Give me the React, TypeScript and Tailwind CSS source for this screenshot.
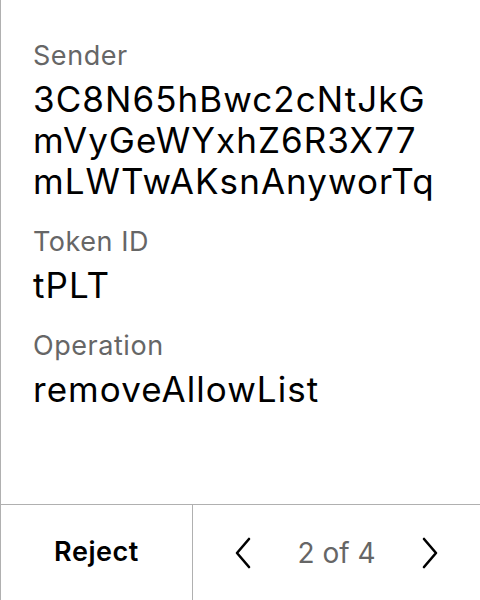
const Field = ({ label, children }: { label: string; children: React.ReactNode }) => (
  <div className="flex flex-col">
    <p className="text-[27px] leading-[32px] tracking-[0.02em] text-[#666666]">{label}</p>
    <div className="mt-[7px] text-[35px] leading-[41px] tracking-[0.03em] text-black">{children}</div>
  </div>
);

const Chevron = ({ dir }: { dir: "left" | "right" }) => (
  <svg width="18" height="32" viewBox="0 0 18 32" fill="none" stroke="black" strokeWidth="2.6" strokeLinecap="round" strokeLinejoin="round">
    {dir === "left" ? <polyline points="15,2 3,16 15,30" /> : <polyline points="3,2 15,16 3,30" />}
  </svg>
);

export default function App() {
  return (
    <div
      className="h-[600px] w-[480px] flex flex-col bg-white border-l border-[#b0b0b0]"
      style={{ fontFamily: "Inter, 'Liberation Sans', sans-serif" }}
    >
      <div className="flex-1 pl-[32px] pr-[30px] pt-[40px] flex flex-col gap-[24px]">
        <Field label="Sender">
          <span className="block">3C8N65hBwc2cNtJkG</span>
          <span className="block">mVyGeWYxhZ6R3X77</span>
          <span className="block">mLWTwAKsnAnyworTq</span>
        </Field>
        <Field label="Token ID">tPLT</Field>
        <Field label="Operation">removeAllowList</Field>
      </div>
      <div className="h-[96px] flex border-t border-[#b0b0b0]">
        <button className="w-[192px] border-r border-[#b0b0b0] flex items-center justify-center text-[27px] font-semibold tracking-[0.02em] text-black">
          Reject
        </button>
        <div className="flex-1 flex items-center justify-between px-[41px]">
          <Chevron dir="left" />
          <span className="text-[28px] text-[#666666]">2 of 4</span>
          <Chevron dir="right" />
        </div>
      </div>
    </div>
  );
}
